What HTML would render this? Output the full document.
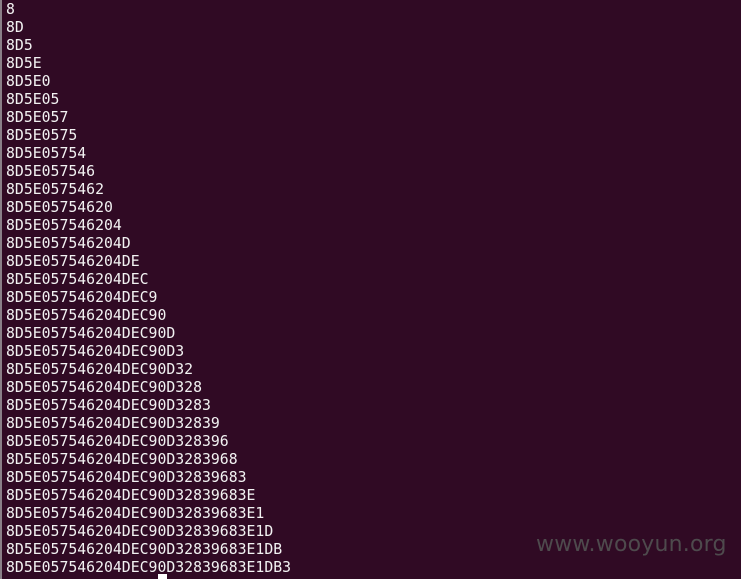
<!DOCTYPE html>
<html><head><meta charset="utf-8"><style>
html,body{margin:0;padding:0;}
body{width:741px;height:579px;background:#300a24;position:relative;overflow:hidden;}
.bar{position:absolute;left:0;top:0;width:2px;height:579px;background:#8a8088;}
pre{position:absolute;left:6px;top:1px;margin:0;font-family:"DejaVu Sans Mono","Liberation Mono",monospace;font-size:14.8px;line-height:18px;color:#f2f2f2;}
.cur{position:absolute;left:158px;top:574px;width:9px;height:5px;background:#fff;}
.wm{position:absolute;left:536px;top:532px;font-family:"DejaVu Sans","Liberation Sans",sans-serif;font-size:22px;color:#4e4a4d;letter-spacing:0.2px;}
</style></head><body>
<div class="bar"></div>
<pre>8
8D
8D5
8D5E
8D5E0
8D5E05
8D5E057
8D5E0575
8D5E05754
8D5E057546
8D5E0575462
8D5E05754620
8D5E057546204
8D5E057546204D
8D5E057546204DE
8D5E057546204DEC
8D5E057546204DEC9
8D5E057546204DEC90
8D5E057546204DEC90D
8D5E057546204DEC90D3
8D5E057546204DEC90D32
8D5E057546204DEC90D328
8D5E057546204DEC90D3283
8D5E057546204DEC90D32839
8D5E057546204DEC90D328396
8D5E057546204DEC90D3283968
8D5E057546204DEC90D32839683
8D5E057546204DEC90D32839683E
8D5E057546204DEC90D32839683E1
8D5E057546204DEC90D32839683E1D
8D5E057546204DEC90D32839683E1DB
8D5E057546204DEC90D32839683E1DB3</pre>
<div class="cur"></div>
<div class="wm">www.wooyun.org</div>
</body></html>
